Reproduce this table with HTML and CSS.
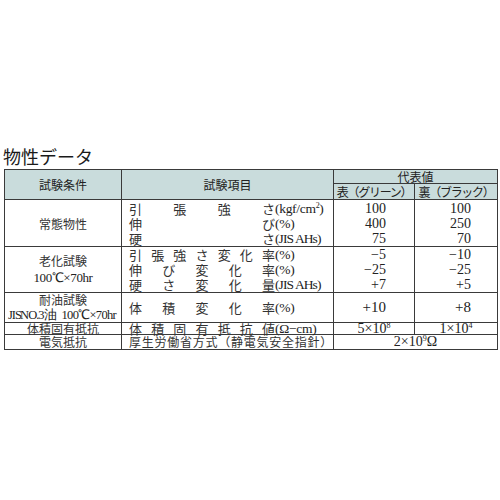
FILE: index.html
```html
<!DOCTYPE html>
<html lang="ja">
<head>
<meta charset="utf-8">
<title>物性データ</title>
<link rel="stylesheet" href="styles.css">
</head>
<body>
<h1 class="title">物性データ</h1>
<table class="spec">
  <colgroup><col class="c1"><col class="c2"><col class="c3"><col class="c4"></colgroup>
  <thead>
    <tr class="hrow1">
      <th rowspan="2">試験条件</th>
      <th rowspan="2">試験項目</th>
      <th colspan="2">代表値</th>
    </tr>
    <tr class="hrow2">
      <th class="sub">表（グリーン）</th>
      <th class="sub">裏（ブラック）</th>
    </tr>
  </thead>
  <tbody>
    <tr class="r-normal">
      <td class="cond">常態物性</td>
      <td class="item">
        <div class="line"><span class="lab"><span>引</span><span>張</span><span>強</span><span>さ</span></span><span class="unit">(kgf/cm<sup>2</sup>)</span></div>
        <div class="line"><span class="lab"><span>伸</span><span>び</span></span><span class="unit">(%)</span></div>
        <div class="line"><span class="lab"><span>硬</span><span>さ</span></span><span class="unit jis">(JIS AHs)</span></div>
      </td>
      <td class="num n3"><div class="nline">100</div><div class="nline">400</div><div class="nline">75</div></td>
      <td class="num n4"><div class="nline">100</div><div class="nline">250</div><div class="nline">70</div></td>
    </tr>
    <tr class="r-aging">
      <td class="cond"><div>老化試験</div><div class="serif">100℃×70hr</div></td>
      <td class="item">
        <div class="line"><span class="lab"><span>引</span><span>張</span><span>強</span><span>さ</span><span>変</span><span>化</span><span>率</span></span><span class="unit">(%)</span></div>
        <div class="line"><span class="lab"><span>伸</span><span>び</span><span>変</span><span>化</span><span>率</span></span><span class="unit">(%)</span></div>
        <div class="line"><span class="lab"><span>硬</span><span>さ</span><span>変</span><span>化</span><span>量</span></span><span class="unit jis">(JIS AHs)</span></div>
      </td>
      <td class="num n3"><div class="nline">−5</div><div class="nline">−25</div><div class="nline">+7</div></td>
      <td class="num n4"><div class="nline">−10</div><div class="nline">−25</div><div class="nline">+5</div></td>
    </tr>
    <tr class="r-oil">
      <td class="cond"><div>耐油試験</div><div class="serif tight"><span class="oil">JIS NO.3油</span><span class="cond2">100℃×70hr</span></div></td>
      <td class="item">
        <div class="line"><span class="lab"><span>体</span><span>積</span><span>変</span><span>化</span><span>率</span></span><span class="unit">(%)</span></div>
      </td>
      <td class="num n3 big">+10</td>
      <td class="num n4 big">+8</td>
    </tr>
    <tr class="r-vol">
      <td class="cond">体積固有抵抗</td>
      <td class="item">
        <div class="line"><span class="lab"><span>体</span><span>積</span><span>固</span><span>有</span><span>抵</span><span>抗</span><span>値</span></span><span class="unit">(Ω−cm)</span></div>
      </td>
      <td class="num center">5×10<sup>8</sup></td>
      <td class="num center">1×10<sup>4</sup></td>
    </tr>
    <tr class="r-elec">
      <td class="cond">電気抵抗</td>
      <td class="item"><div class="wide">厚生労働省方式（静電気安全指針）</div></td>
      <td class="num center" colspan="2">2×10<sup>9</sup>Ω</td>
    </tr>
  </tbody>
</table>
</body>
</html>
```
FILE: styles.css
```css
* { box-sizing: border-box; }
body {
  margin: 0;
  background: #fff;
  color: #333;
  font-family: "Noto Sans CJK JP", "Noto Sans", sans-serif;
}
.title {
  margin: 145px 0 2px 3px;
  font-size: 18px;
  line-height: 22px;
  font-weight: normal;
  color: #1a1a1a;
}
.spec {
  border-collapse: collapse;
  table-layout: fixed;
  width: 493px;
  margin-left: 4px;
}
.c1 { width: 117px; }
.c2 { width: 212px; }
.c3 { width: 81px; }
.c4 { width: 83px; }
.spec th, .spec td {
  border: 1px solid #3a3a3a;
  padding: 0;
  vertical-align: middle;
}
.spec thead th {
  background: #c9dcdc;
  font-weight: normal;
  font-size: 12px;
  color: #222;
  text-align: center;
}
.spec .hrow1 th { line-height: 13px; }
.spec .hrow2 th { line-height: 15px; }
.spec .sub { letter-spacing: -1.3px; white-space: nowrap; }
.spec .cond {
  text-align: center;
  font-size: 12px;
  color: #333;
  white-space: nowrap;
}
.serif {
  font-family: "Liberation Serif", serif;
  font-size: 13px;
  letter-spacing: -0.4px;
  color: #222;
}
.spec .tight { font-size: 12.5px; letter-spacing: -0.7px; padding-left: 3px; text-align: left; }
.oil { letter-spacing: -1px; word-spacing: -3px; }
.cond2 { margin-left: 6px; }
.spec .item { padding-left: 7px; font-size: 13px; }
.line { display: flex; height: 15px; line-height: 15px; white-space: nowrap; }
.lab { display: flex; justify-content: space-between; width: 146px; }
.unit {
  font-family: "Liberation Serif", serif;
  font-size: 13.5px;
  color: #222;
  letter-spacing: -0.3px;
}
.jis { letter-spacing: -0.9px; }
.unit sup, .num sup { font-size: 8px; line-height: 0; vertical-align: 5px; }
.spec .num {
  font-family: "Liberation Serif", serif;
  font-size: 14px;
  color: #222;
  white-space: nowrap;
}
.nline { height: 15px; line-height: 15px; }
.spec .n3 { text-align: right; padding-right: 28px; }
.spec .n4 { text-align: right; padding-right: 26px; }
.spec .center { text-align: center; padding: 0; }
.spec .r-normal td { padding-top: 1px; }
.spec .r-normal td.cond { padding-top: 0; }
.spec .r-oil .cond { line-height: 14.5px; }
.spec .r-oil .line { height: 14px; line-height: 14px; }
.spec .big { font-size: 15px; }
.spec .r-vol td { line-height: 11px; height: 12px; }
.spec .r-vol .line { height: 11px; line-height: 11px; }
.spec .r-elec td { line-height: 14px; }
.wide { font-size: 12px; letter-spacing: 0.75px; white-space: nowrap; }
```
